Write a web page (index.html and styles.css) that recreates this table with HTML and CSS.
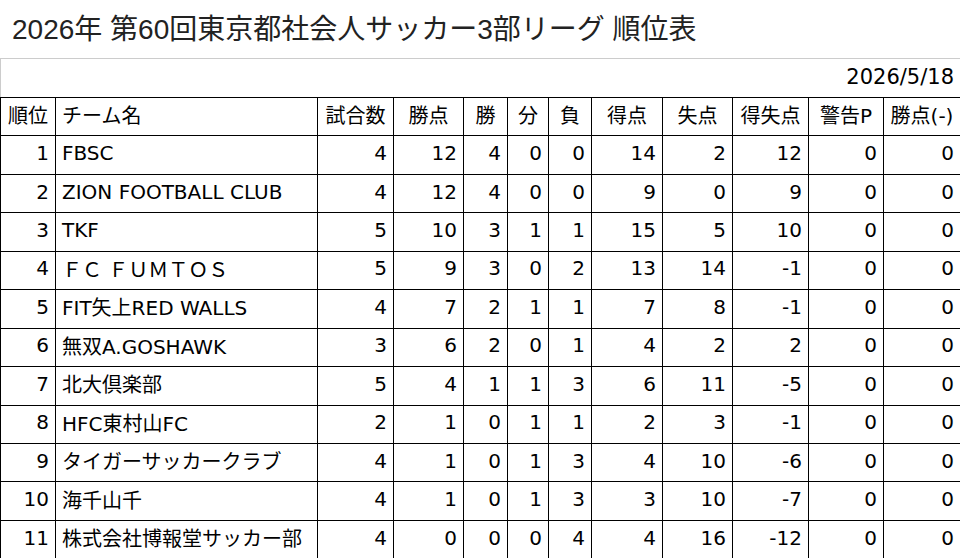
FILE: index.html
```html
<!DOCTYPE html>
<html lang="ja">
<head>
<meta charset="utf-8">
<title>順位表</title>
<link rel="stylesheet" href="styles.css">
</head>
<body>
<h1 class="title">2026年 第60回東京都社会人サッカー3部リーグ 順位表</h1>
<div class="panel">
  <div class="date">2026/5/18</div>
  <table class="standings">
    <colgroup>
      <col class="c-rank"><col class="c-name"><col class="c-gp"><col class="c-pts"><col class="c-w"><col class="c-d"><col class="c-l"><col class="c-gf"><col class="c-ga"><col class="c-gd"><col class="c-card"><col class="c-minus">
    </colgroup>
    <thead>
      <tr><th>順位</th><th class="left">チーム名</th><th>試合数</th><th>勝点</th><th>勝</th><th>分</th><th>負</th><th>得点</th><th>失点</th><th>得失点</th><th>警告P</th><th>勝点(-)</th></tr>
    </thead>
    <tbody>
      <tr><td>1</td><td class="left">FBSC</td><td>4</td><td>12</td><td>4</td><td>0</td><td>0</td><td>14</td><td>2</td><td>12</td><td>0</td><td>0</td></tr>
      <tr><td>2</td><td class="left">ZION FOOTBALL CLUB</td><td>4</td><td>12</td><td>4</td><td>0</td><td>0</td><td>9</td><td>0</td><td>9</td><td>0</td><td>0</td></tr>
      <tr><td>3</td><td class="left">TKF</td><td>5</td><td>10</td><td>3</td><td>1</td><td>1</td><td>15</td><td>5</td><td>10</td><td>0</td><td>0</td></tr>
      <tr><td>4</td><td class="left">ＦＣ ＦＵＭＴＯＳ</td><td>5</td><td>9</td><td>3</td><td>0</td><td>2</td><td>13</td><td>14</td><td>-1</td><td>0</td><td>0</td></tr>
      <tr><td>5</td><td class="left">FIT矢上RED WALLS</td><td>4</td><td>7</td><td>2</td><td>1</td><td>1</td><td>7</td><td>8</td><td>-1</td><td>0</td><td>0</td></tr>
      <tr><td>6</td><td class="left">無双A.GOSHAWK</td><td>3</td><td>6</td><td>2</td><td>0</td><td>1</td><td>4</td><td>2</td><td>2</td><td>0</td><td>0</td></tr>
      <tr><td>7</td><td class="left">北大倶楽部</td><td>5</td><td>4</td><td>1</td><td>1</td><td>3</td><td>6</td><td>11</td><td>-5</td><td>0</td><td>0</td></tr>
      <tr><td>8</td><td class="left">HFC東村山FC</td><td>2</td><td>1</td><td>0</td><td>1</td><td>1</td><td>2</td><td>3</td><td>-1</td><td>0</td><td>0</td></tr>
      <tr><td>9</td><td class="left">タイガーサッカークラブ</td><td>4</td><td>1</td><td>0</td><td>1</td><td>3</td><td>4</td><td>10</td><td>-6</td><td>0</td><td>0</td></tr>
      <tr><td>10</td><td class="left">海千山千</td><td>4</td><td>1</td><td>0</td><td>1</td><td>3</td><td>3</td><td>10</td><td>-7</td><td>0</td><td>0</td></tr>
      <tr><td>11</td><td class="left">株式会社博報堂サッカー部</td><td>4</td><td>0</td><td>0</td><td>0</td><td>4</td><td>4</td><td>16</td><td>-12</td><td>0</td><td>0</td></tr>
    </tbody>
  </table>
</div>
</body>
</html>
```
FILE: styles.css
```css
html, body {
  margin: 0;
  padding: 0;
  background: #fff;
  color: #000;
}
body {
  overflow: hidden;
}
.title {
  margin: 0;
  height: 58px;
  padding: 0 0 0 12px;
  box-sizing: border-box;
  line-height: 60px;
  font-family: "Liberation Sans", "Noto Sans CJK JP", sans-serif;
  font-size: 28px;
  font-weight: normal;
  color: #222;
}
.panel {
  border-top: 1px solid #ccc;
  border-left: 1px solid #ccc;
  width: 1000px;
  font-family: "DejaVu Sans", "Noto Sans CJK JP", sans-serif;
  font-size: 20px;
}
.date {
  height: 38px;
  line-height: 36px;
  width: 953px;
  text-align: right;
  font-size: 21px;
}
.standings {
  border-collapse: collapse;
  table-layout: fixed;
  width: 960px;
  margin-left: -1px;
}
.standings th, .standings td {
  border: 1px solid #000;
  height: 38.45px;
  padding: 0 6px 4px;
  box-sizing: border-box;
  text-align: right;
  font-weight: normal;
  white-space: nowrap;
  overflow: hidden;
}
.standings th {
  text-align: center;
  padding: 0 0 4px;
}
.standings th.left, .standings td.left {
  text-align: left;
  padding-left: 6px;
}
.c-rank { width: 55px; }
.c-name { width: 262px; }
.c-gp { width: 76px; }
.c-pts { width: 70px; }
.c-w { width: 44px; }
.c-d { width: 41px; }
.c-l { width: 43px; }
.c-gf { width: 71px; }
.c-ga { width: 70px; }
.c-gd { width: 76px; }
.c-card { width: 75px; }
.c-minus { width: 77px; }
```
